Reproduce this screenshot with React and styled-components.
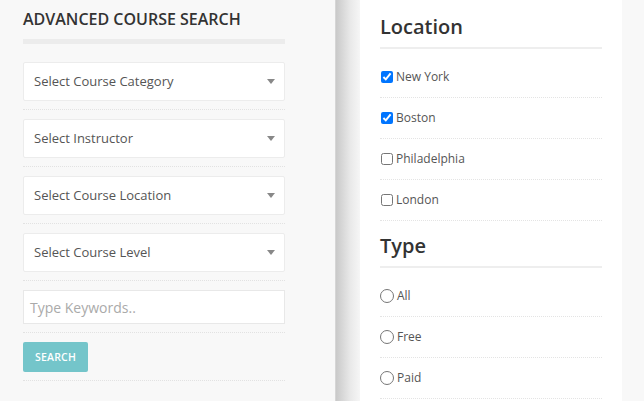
import styled, { createGlobalStyle } from 'styled-components';

const GlobalStyle = createGlobalStyle`
  html, body {
    margin: 0;
    padding: 0;
    background: #f8f8f8;
    font-family: "Open Sans", "Liberation Sans", sans-serif;
  }
`;

const Page = styled.div`
  display: flex;
  height: 401px;
  overflow: hidden;
`;

const SearchPanel = styled.aside`
  width: 262px;
  padding: 9px 50px 0 23px;
  border-right: 1px solid #d6d6d6;
  background: #f8f8f8;
`;

const PanelTitle = styled.h3`
  margin: 0;
  font-size: 16px;
  font-weight: 600;
  color: #333;
  line-height: 20px;
  text-transform: uppercase;
`;

const TitleBar = styled.div`
  height: 5px;
  background: #ececec;
  margin: 10px 0 18px;
`;

const Field = styled.div`
  padding-bottom: 8px;
  margin-bottom: 9px;
  border-bottom: 1px dotted #e2e2e2;
`;

const SelectBox = styled.div`
  display: flex;
  align-items: center;
  justify-content: space-between;
  box-sizing: border-box;
  height: 39px;
  padding: 0 9px 1px 10px;
  background: #fff;
  border: 1px solid #ececec;
  border-radius: 2px;
  font-size: 13px;
  color: #555;
`;

const KeywordInput = styled.div`
  height: 32px;
  display: flex;
  align-items: center;
  padding: 0 6px;
  background: #fff;
  border: 1px solid #e8e8e8;
  font-size: 14px;
  color: #aaa;
`;

const SearchButton = styled.button`
  width: 65px;
  height: 30px;
  border: none;
  border-radius: 2px;
  background: #74c5ca;
  color: #fff;
  font-family: inherit;
  font-size: 10.5px;
  font-weight: 600;
  letter-spacing: 0.2px;
  padding: 0;
`;

const Shadow = styled.div`
  width: 24px;
  background: linear-gradient(to right, #c9c9c9, #e9e9e9 60%, #f6f6f6);
`;

const FilterPanel = styled.section`
  width: 222px;
  padding: 14px 20px 0;
  background: #fff;
`;

const FilterHeading = styled.h4`
  margin: 0;
  font-size: 20px;
  font-weight: 600;
  color: #333;
  line-height: 26px;
  padding-bottom: 7px;
  border-bottom: 2px solid #eee;
  margin-bottom: 8px;
`;

const Option = styled.label`
  display: flex;
  align-items: center;
  box-sizing: border-box;
  height: 41px;
  padding-bottom: 1px;
  border-bottom: 1px dotted #e4e4e4;
  font-size: 12px;
  color: #555;

  input {
    margin: 0 3px 0 ${p => (p.$radio ? '0' : '1px')};
    width: ${p => (p.$radio ? '14px' : '12px')};
    height: ${p => (p.$radio ? '14px' : '12px')};
  }
`;

const FilterGroup = styled.div`
  margin-bottom: 12px;
`;

const Caret = () => (
  <svg width="8" height="5" viewBox="0 0 8 5">
    <path d="M0 0h8L4 5z" fill="#888" />
  </svg>
);

const selects = [
  'Select Course Category',
  'Select Instructor',
  'Select Course Location',
  'Select Course Level',
];

const locations = [
  { name: 'New York', checked: true },
  { name: 'Boston', checked: true },
  { name: 'Philadelphia', checked: false },
  { name: 'London', checked: false },
];

const types = ['All', 'Free', 'Paid'];

export default function App() {
  return (
    <Page>
      <GlobalStyle />
      <SearchPanel>
        <PanelTitle>Advanced Course Search</PanelTitle>
        <TitleBar />
        {selects.map(label => (
          <Field key={label}>
            <SelectBox>
              {label}
              <Caret />
            </SelectBox>
          </Field>
        ))}
        <Field>
          <KeywordInput>Type Keywords..</KeywordInput>
        </Field>
        <Field>
          <SearchButton>SEARCH</SearchButton>
        </Field>
      </SearchPanel>
      <Shadow />
      <FilterPanel>
        <FilterGroup>
          <FilterHeading>Location</FilterHeading>
          {locations.map(loc => (
            <Option key={loc.name}>
              <input type="checkbox" defaultChecked={loc.checked} />
              {loc.name}
            </Option>
          ))}
        </FilterGroup>
        <FilterGroup>
          <FilterHeading>Type</FilterHeading>
          {types.map(t => (
            <Option key={t} $radio>
              <input type="radio" name="type" />
              {t}
            </Option>
          ))}
        </FilterGroup>
      </FilterPanel>
    </Page>
  );
}
